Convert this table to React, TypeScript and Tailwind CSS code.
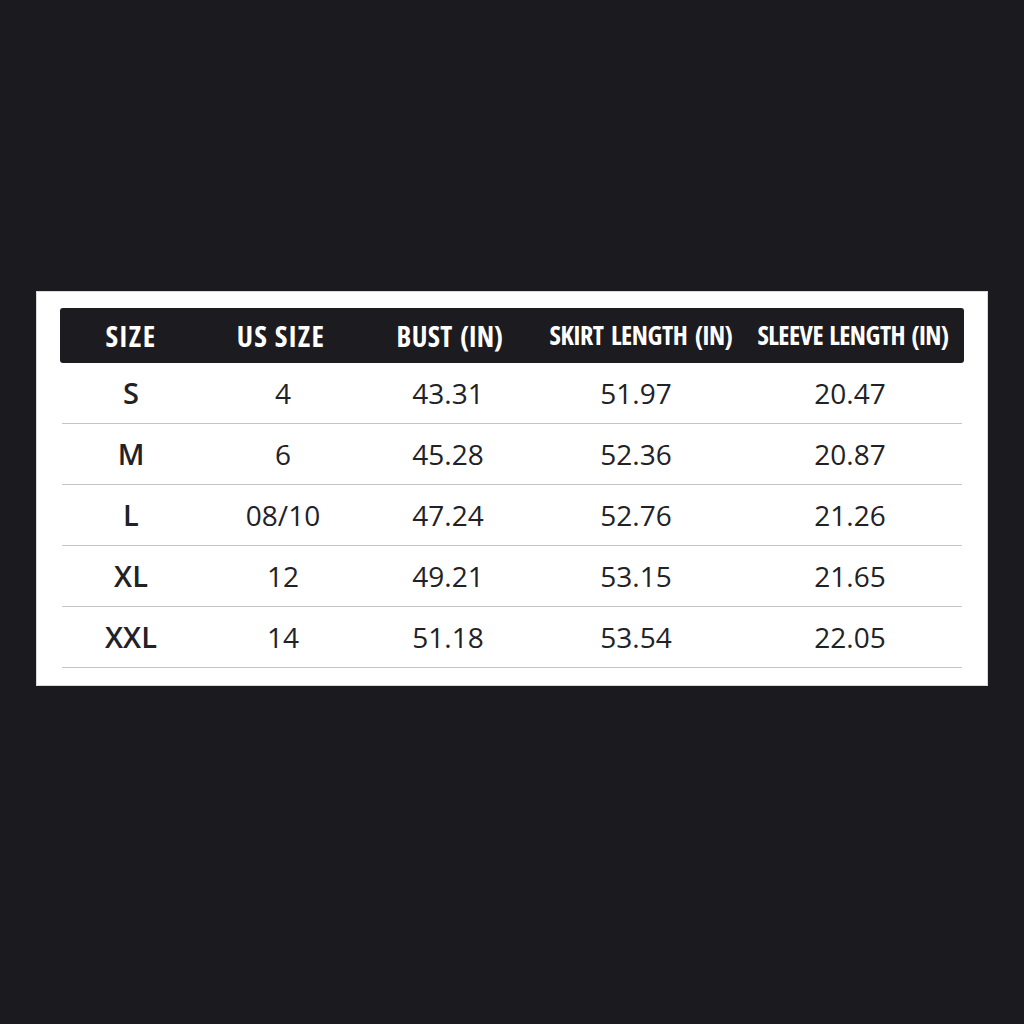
const headers = [
  { label: 'SIZE', cls: 'text-[29px] tracking-[1.5px]' },
  { label: 'US SIZE', cls: 'text-[29px] tracking-[1.3px]' },
  { label: 'BUST (IN)', cls: 'text-[28px] tracking-[0.3px] [word-spacing:2px]' },
  { label: 'SKIRT LENGTH (IN)', cls: 'text-[26px] tracking-[-0.4px] [word-spacing:3px]' },
  { label: 'SLEEVE LENGTH (IN)', cls: 'text-[26px] tracking-[-0.5px] [word-spacing:2px]' },
];

const rows = [
  ['S', '4', '43.31', '51.97', '20.47'],
  ['M', '6', '45.28', '52.36', '20.87'],
  ['L', '08/10', '47.24', '52.76', '21.26'],
  ['XL', '12', '49.21', '53.15', '21.65'],
  ['XXL', '14', '51.18', '53.54', '22.05'],
];

export default function App() {
  return (
    <div className="min-h-screen bg-[#1b1a1f] px-[36px] pt-[291px]">
      <div className="border border-[#d9d9d9] bg-white px-[23px] pt-[16px] pb-[17px]">
        {/* header bar */}
        <div className="grid h-[55px] grid-cols-[142px_158px_180px_202px_222px] items-center rounded-[3px] bg-[#1c1b20] text-white">
          {headers.map((h) => (
            <div
              key={h.label}
              className={`whitespace-nowrap text-center font-bold font-stretch-condensed [font-family:'Open_Sans',sans-serif] ${h.cls}`}
            >
              {h.label}
            </div>
          ))}
        </div>
        {rows.map((r) => (
          <div
            key={r[0]}
            className="mx-[2px] grid h-[61px] grid-cols-[138px_166px_164px_212px_216px] items-center border-b border-[#c4c4c4] text-[#222226]"
          >
            {r.map((c, i) => (
              <div
                key={i}
                className={`text-center [font-family:'Open_Sans',sans-serif] ${i === 0 ? 'text-[29px] font-semibold' : 'text-[28px] font-normal'}`}
              >
                {c}
              </div>
            ))}
          </div>
        ))}
      </div>
    </div>
  );
}
